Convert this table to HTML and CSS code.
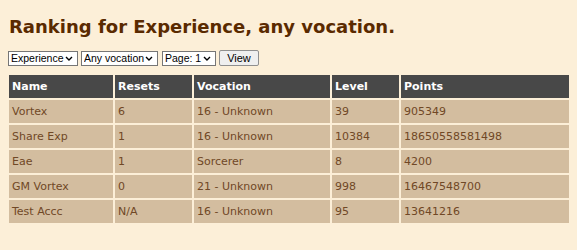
FILE: index.html
```html
<!DOCTYPE html>
<html>
<head>
<meta charset="utf-8">
<link rel="stylesheet" href="styles.css">
</head>
<body>
<h1 class="title">Ranking for Experience, any vocation.</h1>
<form class="filters">
  <select class="sel sel-skill"><option>Experience</option></select>
  <select class="sel sel-voc"><option>Any vocation</option></select>
  <select class="sel sel-page"><option>Page: 1</option></select>
  <button type="button" class="btn">View</button>
</form>
<table class="ranking">
  <colgroup>
    <col class="c-name"><col class="c-resets"><col class="c-voc"><col class="c-level"><col class="c-points">
  </colgroup>
  <thead>
    <tr><th>Name</th><th>Resets</th><th>Vocation</th><th>Level</th><th>Points</th></tr>
  </thead>
  <tbody>
    <tr><td>Vortex</td><td>6</td><td>16 - Unknown</td><td>39</td><td>905349</td></tr>
    <tr><td>Share Exp</td><td>1</td><td>16 - Unknown</td><td>10384</td><td>18650558581498</td></tr>
    <tr><td>Eae</td><td>1</td><td>Sorcerer</td><td>8</td><td>4200</td></tr>
    <tr><td>GM Vortex</td><td>0</td><td>21 - Unknown</td><td>998</td><td>16467548700</td></tr>
    <tr><td>Test Accc</td><td>N/A</td><td>16 - Unknown</td><td>95</td><td>13641216</td></tr>
  </tbody>
</table>
</body>
</html>
```
FILE: styles.css
```css
body {
  margin: 8px;
  background: #fcefd8;
  font-family: "DejaVu Sans", Verdana, sans-serif;
  font-size: 11px;
  color: #6b4420;
}
.title {
  margin: 7px 0 11px 1px;
  font-size: 18px;
  font-weight: bold;
  color: #5a2a00;
  line-height: 24px;
}
.filters {
  display: flex;
  align-items: center;
  margin: 0 0 7px 0;
  height: 16px;
}
.sel {
  -webkit-appearance: none;
  appearance: none;
  font-family: "Liberation Sans", Arial, sans-serif;
  font-size: 10.5px;
  height: 15px;
  line-height: 13px;
  padding: 0 12px 0 2px;
  border: 1px solid #767676;
  background-color: #fff;
  background-image: url("data:image/svg+xml,%3Csvg xmlns='http://www.w3.org/2000/svg' width='8' height='5' viewBox='0 0 8 5'%3E%3Cpath d='M1 1l3 3 3-3' fill='none' stroke='%23000' stroke-width='1.4'/%3E%3C/svg%3E");
  background-repeat: no-repeat;
  background-position: right 4px center;
  color: #000;
  border-radius: 0;
}
.sel-skill { width: 70px; }
.sel-voc { width: 77px; margin-left: 3px; }
.sel-page { width: 54px; margin-left: 4px; }
.btn {
  font-family: "Liberation Sans", Arial, sans-serif;
  font-size: 11px;
  height: 16px;
  width: 40px;
  padding: 0;
  margin-left: 3px;
  border: 1px solid #8f8f8f;
  background: #efefef;
  border-radius: 2px;
  color: #000;
}
.ranking {
  border-spacing: 2px;
  margin-left: -1px;
  table-layout: fixed;
  width: 565px;
}
.c-name { width: 104px; }
.c-resets { width: 77px; }
.c-voc { width: 136px; }
.c-level { width: 67px; }
.c-points { width: 169px; }
.ranking th, .ranking td {
  height: 23px;
  padding: 0 3px;
  text-align: left;
  box-sizing: border-box;
  white-space: nowrap;
}
.ranking th {
  background: #484848;
  color: #fff;
  font-weight: bold;
}
.ranking td {
  background: #d3bd9f;
  color: #704826;
}
```
